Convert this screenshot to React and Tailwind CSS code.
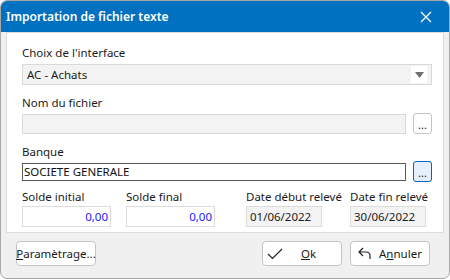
import React from "react";

const font = { fontFamily: '"Noto Sans", "Segoe UI", sans-serif' };

function Label({ children, className = "" }) {
  return <div className={`text-[11.5px] leading-[16px] text-[#1a1a1a] whitespace-nowrap ${className}`}>{children}</div>;
}

function DotsButton({ active }) {
  return (
    <div
      className={`w-[19px] h-[21px] rounded-[3px] border flex items-end justify-center pb-[3px] text-[11px] leading-[11px] text-[#202020] ${
        active ? "border-[#0067c0] bg-[#e6f0fa]" : "border-[#c4c4c4] bg-white"
      }`}
    >
      ...
    </div>
  );
}

export default function App() {
  return (
    <div className="w-[450px] h-[280px] bg-white" style={font}>
      <div className="w-[450px] h-[279px] bg-[#f0f0f0] border border-[#a8a8a8] rounded-[7px] overflow-hidden flex flex-col">
        {/* title bar */}
        <div className="h-[31px] bg-[#0070c0] flex items-center justify-between pl-[5px] pr-[17px] shrink-0">
          <span className="text-white text-[12px] font-semibold">Importation de fichier texte</span>
          <svg width="12" height="12" viewBox="0 0 12 12">
            <path d="M1 1 L11 11 M11 1 L1 11" stroke="white" strokeWidth="1.3" />
          </svg>
        </div>
        {/* panel */}
        <div className="mx-[5px] h-[201px] bg-white border border-[#dcdcdc] pl-[15px] pr-[11px] pt-[12px] shrink-0">
          <Label>Choix de l'interface</Label>
          <div className="mt-[3px] h-[21px] w-[410px] bg-[#f3f3f3] border border-[#d9d9d9] flex items-center justify-between pl-[4px] pr-[4px]">
            <span className="text-[11.5px] text-[#1a1a1a]">AC - Achats</span>
            <div className="w-[16px] h-[17px] bg-white flex items-center justify-center">
              <svg width="9" height="6" viewBox="0 0 9 6">
                <path d="M0 0 H9 L4.5 6 Z" fill="#6f6f6f" />
              </svg>
            </div>
          </div>

          <Label className="mt-[10px]">Nom du fichier</Label>
          <div className="mt-[2px] flex items-center gap-[7px]">
            <div className="h-[20px] w-[385px] bg-[#f3f3f3] border border-[#d9d9d9]" />
            <DotsButton />
          </div>

          <Label className="mt-[10px]">Banque</Label>
          <div className="mt-[1px] flex items-center gap-[7px]">
            <div className="h-[18px] w-[385px] bg-white border border-[#5a5a5a] flex items-center pl-[1px] text-[11.5px] text-[#111]">
              SOCIETE GENERALE
            </div>
            <DotsButton active />
          </div>

          <div className="mt-[7px] flex">
            <div className="w-[104px]">
              <Label>Solde initial</Label>
              <div className="mt-[1px] h-[21px] w-[89px] bg-white border border-[#dcdcdc] flex items-center justify-end pr-[2px] text-[11.5px] text-[#2020ff]">
                0,00
              </div>
            </div>
            <div className="w-[120px]">
              <Label>Solde final</Label>
              <div className="mt-[1px] h-[21px] w-[89px] bg-white border border-[#dcdcdc] flex items-center justify-end pr-[2px] text-[11.5px] text-[#2020ff]">
                0,00
              </div>
            </div>
            <div className="w-[104px]">
              <Label>Date début relevé</Label>
              <div className="mt-[1px] h-[21px] w-[76px] bg-[#f3f3f3] border border-[#dcdcdc] flex items-center pl-[3px] text-[11.5px] text-[#222]">
                01/06/2022
              </div>
            </div>
            <div>
              <Label>Date fin relevé</Label>
              <div className="mt-[1px] h-[21px] w-[76px] bg-[#f3f3f3] border border-[#dcdcdc] flex items-center pl-[3px] text-[11.5px] text-[#222]">
                30/06/2022
              </div>
            </div>
          </div>
        </div>
        {/* footer */}
        <div className="flex items-start pt-[8px] pl-[15px] pr-[19px]">
          <div className="h-[25px] w-[80px] rounded-[4px] border border-[#c4c4c4] bg-white flex items-center justify-center text-[11.5px] text-[#1a1a1a] whitespace-nowrap">
            <span><span className="underline">P</span>aramètrage...</span>
          </div>
          <div className="flex-1" />
          <div className="h-[25px] w-[80px] rounded-[4px] border border-[#c4c4c4] bg-white flex items-center text-[11.5px] text-[#1a1a1a]">
            <svg width="16" height="12" viewBox="0 0 16 12" className="ml-[4px]">
              <path d="M1 6 L5.5 10.5 L15 1" stroke="#222" strokeWidth="1.2" fill="none" />
            </svg>
            <span className="ml-[18px]"><span className="underline">O</span>k</span>
          </div>
          <div className="ml-[8px] h-[25px] w-[80px] rounded-[4px] border border-[#c4c4c4] bg-white flex items-center text-[11.5px] text-[#1a1a1a]">
            <svg width="14" height="13" viewBox="0 0 14 13" className="ml-[7px]">
              <path d="M5 1 L1 5 L5 9 M1 5 H8 Q12 5 12 9 V12" stroke="#222" strokeWidth="1.2" fill="none" />
            </svg>
            <span className="ml-[7px]">A<span className="underline">n</span>nuler</span>
          </div>
        </div>
      </div>
    </div>
  );
}
